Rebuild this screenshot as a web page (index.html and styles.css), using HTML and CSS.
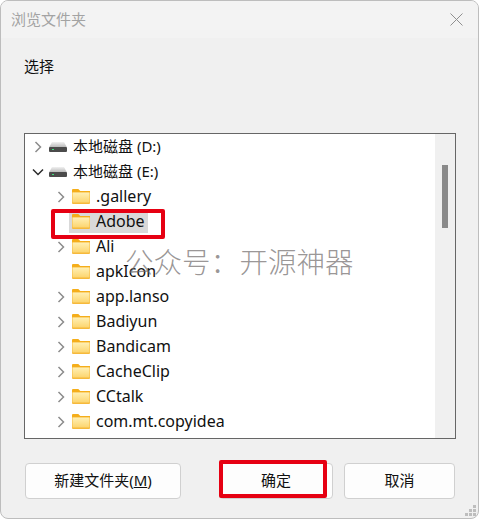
FILE: index.html
```html
<!DOCTYPE html>
<html lang="zh-CN">
<head>
<meta charset="utf-8">
<title>浏览文件夹</title>
<link rel="stylesheet" href="styles.css">
</head>
<body>
<svg class="defs" width="0" height="0" aria-hidden="true">
  <defs>
    <linearGradient id="fg" x1="0" y1="0" x2="0" y2="1">
      <stop offset="0" stop-color="#fff0b4"/>
      <stop offset="1" stop-color="#fcd56f"/>
    </linearGradient>
    <linearGradient id="dg" x1="0" y1="0" x2="0" y2="1">
      <stop offset="0" stop-color="#f1f1f1"/>
      <stop offset="1" stop-color="#b5b5b5"/>
    </linearGradient>
    <symbol id="folder" viewBox="0 0 18 15">
      <path d="M0 1.2C0 .5.5 0 1.2 0h4.6c.4 0 .7.1 1 .4L8.3 2H18v3H0z" fill="#f5ae1b"/>
      <rect x="0" y="3" width="18" height="12" rx="1" fill="#f6b93b"/>
      <rect x="0.5" y="3.5" width="17" height="10" fill="url(#fg)"/>
    </symbol>
    <symbol id="drive" viewBox="0 0 18 10">
      <path d="M3 0h12l3 5.5H0z" fill="url(#dg)"/>
      <rect x="0" y="5" width="18" height="5" rx="1" fill="#4b4b4b"/>
      <rect x="3" y="7" width="2" height="1" fill="#3de07a"/>
    </symbol>
    <symbol id="right" viewBox="0 0 10 12">
      <path d="M2.5 1l5 5-5 5" fill="none" stroke="#8c8c8c" stroke-width="1.5"/>
    </symbol>
    <symbol id="down" viewBox="0 0 12 10">
      <path d="M1 2.5l5 5 5-5" fill="none" stroke="#2b2b2b" stroke-width="1.5"/>
    </symbol>
  </defs>
</svg>

<div class="window">
  <header class="titlebar">
    <span class="title">浏览文件夹</span>
    <svg class="close" width="13" height="13" viewBox="0 0 13 13" aria-hidden="true"><path d="M.5.5l12 12M12.5.5l-12 12" fill="none" stroke="#8f8f8f" stroke-width="1"/></svg>
  </header>

  <main class="content">
    <p class="prompt">选择</p>
    <div class="tree">
      <ul class="rows">
        <li class="row"><span class="tw"><svg class="chev"><use href="#right"/></svg></span><svg class="ico-drive"><use href="#drive"/></svg><span class="label drive-label">本地磁盘 (D:)</span></li>
        <li class="row"><span class="tw"><svg class="chev-down"><use href="#down"/></svg></span><svg class="ico-drive"><use href="#drive"/></svg><span class="label drive-label">本地磁盘 (E:)</span></li>
        <li class="row sub"><span class="tw"><svg class="chev"><use href="#right"/></svg></span><svg class="ico"><use href="#folder"/></svg><span class="label">.gallery</span></li>
        <li class="row sub selected"><span class="tw"></span><span class="sel"><svg class="ico"><use href="#folder"/></svg><span class="label">Adobe</span></span></li>
        <li class="row sub"><span class="tw"><svg class="chev"><use href="#right"/></svg></span><svg class="ico"><use href="#folder"/></svg><span class="label">Ali</span></li>
        <li class="row sub"><span class="tw"></span><svg class="ico"><use href="#folder"/></svg><span class="label">apkIcon</span></li>
        <li class="row sub"><span class="tw"><svg class="chev"><use href="#right"/></svg></span><svg class="ico"><use href="#folder"/></svg><span class="label">app.lanso</span></li>
        <li class="row sub"><span class="tw"><svg class="chev"><use href="#right"/></svg></span><svg class="ico"><use href="#folder"/></svg><span class="label">Badiyun</span></li>
        <li class="row sub"><span class="tw"><svg class="chev"><use href="#right"/></svg></span><svg class="ico"><use href="#folder"/></svg><span class="label">Bandicam</span></li>
        <li class="row sub"><span class="tw"><svg class="chev"><use href="#right"/></svg></span><svg class="ico"><use href="#folder"/></svg><span class="label">CacheClip</span></li>
        <li class="row sub"><span class="tw"><svg class="chev"><use href="#right"/></svg></span><svg class="ico"><use href="#folder"/></svg><span class="label">CCtalk</span></li>
        <li class="row sub"><span class="tw"><svg class="chev"><use href="#right"/></svg></span><svg class="ico"><use href="#folder"/></svg><span class="label">com.mt.copyidea</span></li>
      </ul>
      <div class="scrollbar"><div class="thumb"></div></div>
    </div>
    <footer class="actions">
      <button class="btn btn-new" type="button">新建文件夹(<u>M</u>)</button>
      <button class="btn btn-ok" type="button">确定</button>
      <button class="btn btn-cancel" type="button">取消</button>
    </footer>
  </main>

  <div class="mark mark-adobe"></div>
  <div class="mark mark-ok"></div>
  <div class="watermark">公众号： 开源神器</div>
  <svg class="grip" width="12" height="12" viewBox="0 0 12 12" aria-hidden="true"><path d="M8 0h3v3H8zM4 4h3v3H4zM8 4h3v3H8zM0 8h3v3H0zM4 8h3v3H4zM8 8h3v3H8z" fill="#bdbdbd"/></svg>
</div>
</body>
</html>
```

FILE: styles.css
```css
* { box-sizing: border-box; }
html, body { margin: 0; padding: 0; background: #fff; }
body {
  width: 479px;
  height: 519px;
  overflow: hidden;
  font-family: "Noto Sans", "Noto Sans CJK SC", sans-serif;
  font-size: 15px;
  color: #111;
}
.defs { position: absolute; }

.window {
  position: relative;
  width: 479px;
  height: 519px;
  background: #f0f0f0;
  border: 1px solid #bdbdbd;
  border-radius: 8px;
  overflow: hidden;
  display: flex;
  flex-direction: column;
}

.titlebar {
  height: 37px;
  flex: none;
  background: #f3f3f3;
  display: flex;
  align-items: center;
  justify-content: space-between;
  padding: 0 15px 0 10px;
}
.title { color: #a3a3a3; line-height: 37px; }
.close { display: block; }

.content {
  flex: 1;
  display: flex;
  flex-direction: column;
  padding: 0 22px 0 23px;
}
.prompt { margin: 16px 0 0; height: 24px; line-height: 24px; }

.tree {
  margin-top: 55px;
  height: 306px;
  flex: none;
  width: 432px;
  background: #fff;
  border: 1px solid #666;
  display: flex;
  overflow: hidden;
}
.rows {
  flex: 1;
  list-style: none;
  margin: 0;
  padding: 0;
}
.row {
  height: 25px;
  display: flex;
  align-items: center;
  padding-left: 1px;
}
.row.sub { padding-left: 24px; }
.tw {
  width: 23px;
  flex: none;
  display: flex;
  align-items: center;
  justify-content: center;
}
.chev { width: 10px; height: 12px; display: block; }
.chev-down { width: 12px; height: 10px; display: block; }
.ico-drive { width: 18px; height: 10px; margin-right: 6px; flex: none; }
.ico { width: 18px; height: 15px; margin-right: 6px; flex: none; }
.label { white-space: nowrap; font-size: 16px; line-height: 22px; margin-top: -1px; }
.drive-label { font-size: 15px; margin-top: -2px; }
.sel {
  display: flex;
  align-items: center;
  height: 22px;
  background: #d9d9d9;
  margin-left: -3px;
  padding: 0 3px;
}

.scrollbar { width: 20px; flex: none; background: #f0f0f0; position: relative; }
.thumb {
  width: 6px;
  height: 63px;
  background: #8a8a8a;
  margin: 31px 0 0 7px;
}

.actions {
  margin-top: 24px;
  display: flex;
  padding-left: 1px;
}
.btn {
  height: 36px;
  font: inherit;
  color: #111;
  background: #fdfdfd;
  border: 1px solid #d0d0d0;
  border-radius: 4px;
  padding: 0 0 4px;
}
.btn-new { width: 156px; }
.btn-ok { width: 114px; margin-left: 38px; padding-right: 3px; padding-left: 3px; }
.btn-cancel { width: 111px; margin-left: 11px; }

.mark {
  position: absolute;
  border: 4px solid #e60012;
  border-radius: 2px;
}
.mark-adobe { left: 50px; top: 208px; width: 114px; height: 30px; }
.mark-ok { left: 218px; top: 459px; width: 108px; height: 38px; }

.watermark {
  position: absolute;
  left: 124px;
  top: 242px;
  font-size: 28.5px;
  word-spacing: -7px;
  line-height: 38px;
  font-weight: 300;
  color: rgba(110, 105, 105, 0.7);
  white-space: nowrap;
}
.grip { position: absolute; right: 1px; bottom: 1px; }
```
